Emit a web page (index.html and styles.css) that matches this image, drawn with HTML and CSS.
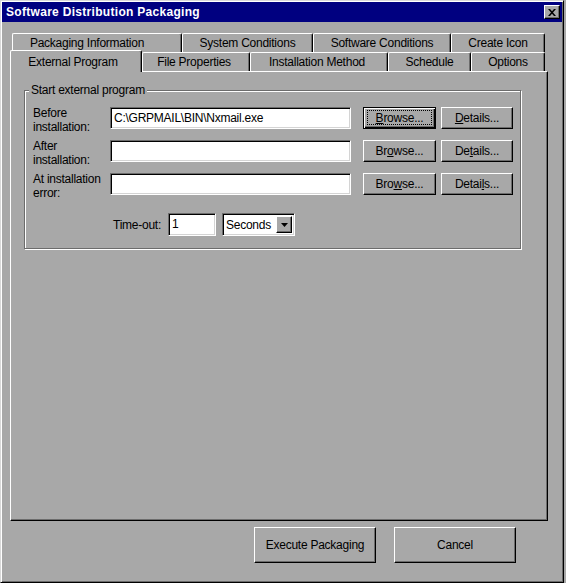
FILE: index.html
```html
<!DOCTYPE html>
<html>
<head>
<meta charset="utf-8">
<link rel="stylesheet" href="styles.css">
</head>
<body>
<div class="window">
  <div class="titlebar">
    <span class="title">Software Distribution Packaging</span>
    <span class="close"><svg width="8" height="7" viewBox="0 0 8 7"><path d="M0 0h2l2 2.2L6 0h2L5 3.5 8 7H6L4 4.8 2 7H0l3-3.5z" fill="#000"/></svg></span>
  </div>
  <div class="client">
    <div class="tabs">
      <div class="tabrow back">
        <div class="tab t-pi">Packaging Information</div>
        <div class="tab t-sc">System Conditions</div>
        <div class="tab t-soc">Software Conditions</div>
        <div class="tab t-ci">Create Icon</div>
      </div>
      <div class="tabrow front">
        <div class="tab active t-ep">External Program</div>
        <div class="tab t-fp">File Properties</div>
        <div class="tab t-im">Installation Method</div>
        <div class="tab t-sch">Schedule</div>
        <div class="tab t-opt">Options</div>
      </div>
    </div>
    <div class="panel">
      <fieldset class="group">
        <legend>Start external program</legend>
        <div class="grid">
          <div class="label">Before<br>installation:</div>
          <div class="field">C:\GRPMAIL\BIN\Nxmail.exe</div>
          <button class="btn small browse focus"><span class="focusrect"><u>B</u>rowse...</span></button>
          <button class="btn small details"><u>D</u>etails...</button>

          <div class="label">After<br>installation:</div>
          <div class="field"></div>
          <button class="btn small browse">Br<u>o</u>wse...</button>
          <button class="btn small details">De<u>t</u>ails...</button>

          <div class="label">At installation<br>error:</div>
          <div class="field"></div>
          <button class="btn small browse">Bro<u>w</u>se...</button>
          <button class="btn small details">Detai<u>l</u>s...</button>
        </div>
        <div class="timeout">
          <span class="tlabel">Time-out:</span>
          <div class="field tfield">1</div>
          <div class="field select">
            <span class="seltext">Seconds</span>
            <span class="arrow"><svg width="7" height="4" viewBox="0 0 7 4"><path d="M0 0h7L3.5 4z" fill="#000"/></svg></span>
          </div>
        </div>
      </fieldset>
    </div>
    <div class="footer">
      <button class="btn big">Execute Packaging</button>
      <button class="btn big">Cancel</button>
    </div>
  </div>
</div>
</body>
</html>
```

FILE: styles.css
```css
body {
  margin: 0;
  background: #a8a8a8;
  font-family: "Liberation Sans", Arial, sans-serif;
  font-size: 12px;
  letter-spacing: -0.25px;
  color: #000;
}

.window {
  width: 564px;
  height: 583px;
  box-sizing: border-box;
  border: 1px solid;
  border-color: #d8d8d8 #000 #000 #d8d8d8;
  padding: 1px;
  box-shadow: inset 1px 1px #fff, inset -1px -1px #6c6c6c;
  display: flex;
  flex-direction: column;
  background: #a8a8a8;
}

.titlebar {
  height: 20px;
  flex: none;
  background: #000080;
  color: #fff;
  display: flex;
  align-items: center;
  justify-content: space-between;
  padding: 0 2px 0 4px;
  font-weight: bold;
  font-size: 12px;
  letter-spacing: 0.3px;
}

.close {
  width: 16px;
  height: 14px;
  box-sizing: border-box;
  background: #a8a8a8;
  border: 1px solid;
  border-color: #fff #000 #000 #fff;
  box-shadow: inset -1px -1px #6c6c6c;
  display: flex;
  align-items: center;
  justify-content: center;
}

.client {
  padding: 11px 14px 0 8px;
  display: flex;
  flex-direction: column;
}

.tabs {
  display: flex;
  flex-direction: column;
}

.tabrow {
  display: flex;
  height: 19px;
}

.tabrow.back {
  padding-left: 2px;
}

.tab {
  box-sizing: border-box;
  height: 19px;
  flex: none;
  border-top: 1px solid #fff;
  border-left: 1px solid #fff;
  border-right: 1px solid #000;
  box-shadow: inset -1px 0 #6c6c6c;
  border-radius: 2px 2px 0 0;
  display: flex;
  align-items: center;
  justify-content: center;
  white-space: nowrap;
  background: #a8a8a8;
}

.tab.active {
  height: 22px;
  margin-top: -2px;
  position: relative;
  z-index: 1;
  padding-right: 6px;
}

.t-pi { width: 170px; padding-right: 20px; }
.t-sc { width: 131px; }
.t-soc { width: 138px; }
.t-ci { width: 94px; }
.t-ep { width: 132px; }
.t-fp { width: 108px; padding-right: 4px; }
.t-im { width: 138px; padding-right: 4px; }
.t-sch { width: 83px; }
.t-opt { width: 74px; }

.panel {
  box-sizing: border-box;
  width: 538px;
  height: 450px;
  border: 1px solid;
  border-color: #fff #000 #000 #fff;
  box-shadow: inset -1px -1px #6c6c6c;
  padding: 0 0 0 13px;
}

.group {
  margin: 11px 0 0;
  padding: 0;
  width: 497px;
  box-sizing: border-box;
  min-width: 0;
  border: 1px solid #6c6c6c;
  box-shadow: inset 1px 1px #fff, 1px 1px #fff;
}

.group legend {
  margin-left: 4px;
  padding: 0 2px;
  line-height: 14px;
  background: #a8a8a8;
}

.grid {
  display: grid;
  grid-template-columns: 77px 253px 78px 72px;
  grid-auto-rows: 22px;
  row-gap: 11px;
  padding: 10px 0 0 8px;
}

.label {
  line-height: 14px;
  margin-top: -1px;
  white-space: nowrap;
}

.field {
  box-sizing: border-box;
  width: 241px;
  height: 22px;
  background: #fff;
  border: 1px solid;
  border-color: #6c6c6c #fff #fff #6c6c6c;
  box-shadow: inset 1px 1px #000, inset -1px -1px #d4d4d4;
  padding: 0 0 0 3px;
  line-height: 20px;
  white-space: nowrap;
}

.btn {
  box-sizing: border-box;
  font: inherit;
  letter-spacing: inherit;
  color: #000;
  background: #a8a8a8;
  border: 1px solid;
  border-color: #fff #000 #000 #fff;
  box-shadow: inset -1px -1px #6c6c6c;
  padding: 0;
  display: flex;
  align-items: center;
  justify-content: center;
}

.small {
  height: 22px;
}

.browse {
  width: 73px;
}

.details {
  width: 72px;
}

.btn.focus {
  border-color: #000;
  box-shadow: inset 1px 1px #fff, inset -1px -1px #000, inset -2px -2px #6c6c6c;
}

.focusrect {
  flex: 1;
  align-self: stretch;
  margin: 2px 3px 3px 3px;
  border: 1px dotted #000;
  display: flex;
  align-items: center;
  justify-content: center;
}

.timeout {
  display: flex;
  align-items: center;
  margin-top: 18px;
  padding: 0 0 12px 88px;
}

.tlabel {
  box-sizing: border-box;
  width: 55px;
  padding-right: 7px;
  text-align: right;
  white-space: nowrap;
}

.tfield {
  width: 48px;
  height: 23px;
  line-height: 21px;
}

.select {
  width: 73px;
  height: 23px;
  margin-left: 6px;
  display: flex;
  align-items: center;
  justify-content: space-between;
  padding-right: 2px;
}

.arrow {
  box-sizing: border-box;
  width: 16px;
  height: 17px;
  background: #a8a8a8;
  border: 1px solid;
  border-color: #fff #000 #000 #fff;
  box-shadow: inset -1px -1px #6c6c6c;
  display: flex;
  align-items: center;
  justify-content: center;
}

.footer {
  display: flex;
  justify-content: flex-end;
  gap: 18px;
  padding-right: 32px;
  margin-top: 6px;
}

.big {
  width: 122px;
  height: 36px;
}
```
